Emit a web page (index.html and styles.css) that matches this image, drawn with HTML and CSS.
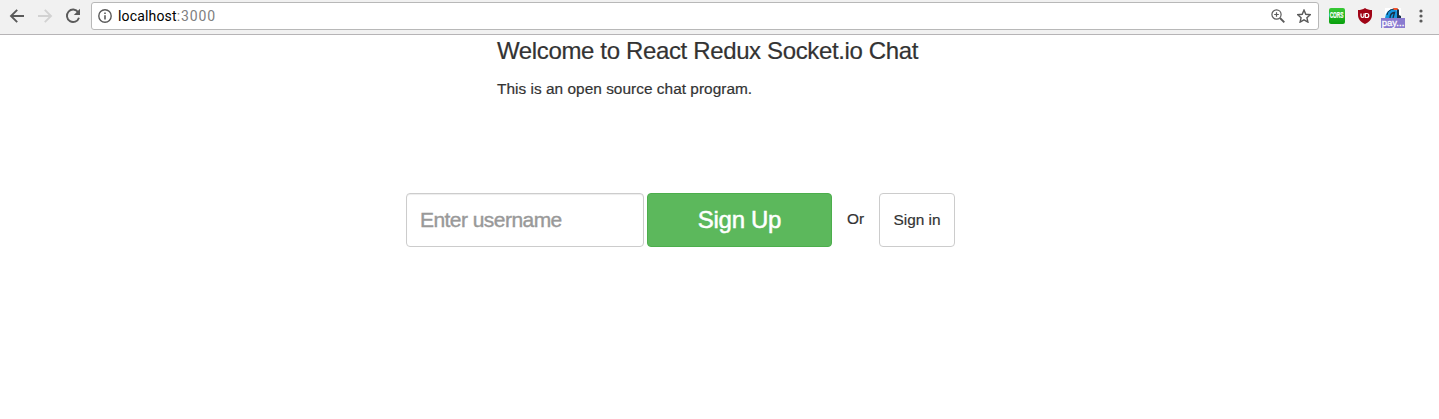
FILE: index.html
```html
<!DOCTYPE html>
<html lang="en">
<head>
<meta charset="utf-8">
<title>React Redux Socket.io Chat</title>
<link rel="stylesheet" href="styles.css">
</head>
<body>
<header class="toolbar">
  <nav class="nav">
    <svg width="16" height="16" viewBox="0 0 16 16" class="icon"><path d="M15 8H2.500M8.200 1.800L2 8l6.200 6.200"/></svg>
    <svg width="16" height="16" viewBox="0 0 16 16" class="icon icon-off"><path d="M1 8h12.500M7.800 1.800L14 8l-6.200 6.200"/></svg>
    <svg width="16" height="16" viewBox="0 0 16 16" class="icon"><path d="M13.200 4.200A6.200 6.200 0 1 0 14 9.700"/><path class="solid" d="M15 .8V7H8.800z"/></svg>
  </nav>
  <div class="address">
    <svg width="14" height="14" viewBox="0 0 14 14" class="icon info"><circle cx="7" cy="7" r="6.200"/><path class="solid" d="M6.200 6.200h1.600V10.500H6.200zM6.200 3.400h1.600V5H6.200z"/></svg>
    <span class="url">localhost<span class="port">:3000</span></span>
    <svg width="14" height="14" viewBox="0 0 14 14" class="icon zoom"><circle cx="5.500" cy="5.500" r="4.600"/><path d="M3.200 5.500h4.600M5.500 3.200v4.600"/><path class="handle" d="M9 9l4.300 4.300"/></svg>
    <svg width="14" height="14" viewBox="0 0 14 14" class="icon star"><path d="M7 1.100l1.800 4.200 4.500.4-3.400 3 1 4.400L7 10.800l-3.900 2.300 1-4.400-3.400-3 4.500-.4z"/></svg>
  </div>
  <div class="extensions">
    <span class="cors"><span class="cors-text">CORS</span></span>
    <svg class="shield" width="14" height="16" viewBox="0 0 14 16"><path fill="#a00416" d="M7 0c2 1.500 4.500 2 7 2v5c0 4.500-3 7.200-7 9-4-1.800-7-4.500-7-9V2c2.500 0 5-.5 7-2z"/><path fill="none" stroke="#fff" stroke-width="1.200" d="M3 5.500v2.300q0 1.700 1.500 1.700T6 7.800V5.500"/><path d="M7.300 5.500h1.500a2 2 0 0 1 0 4H7.300z" fill="none" stroke="#fff" stroke-width="1.200"/></svg>
    <span class="pay">
      <svg width="16" height="10" viewBox="0 0 16 10"><path fill="#fff" d="M0 0h16v10H0z"/><path fill="#1696df" d="M0 10Q1 1 9 .8q3 0 3 3V10z"/><path fill="none" stroke="#173047" stroke-width="1" d="M2 7Q3 1.500 9 1"/><path fill="#f0532d" d="M8 0h4.500l1 2H9z"/><path fill="none" stroke="#173047" stroke-width="1.300" d="M5 10q0-5 4.500-5.500L8 10"/><path fill="#172e46" d="M12 1.500h2V7l2 1v2h-4z"/></svg>
      <span class="badge">pay...</span>
    </span>
    <svg class="menu" width="4" height="14" viewBox="0 0 4 14"><circle cx="2" cy="2" r="1.600"/><circle cx="2" cy="7" r="1.600"/><circle cx="2" cy="12" r="1.600"/></svg>
  </div>
</header>
<main>
  <section class="intro">
    <h1>Welcome to React Redux Socket.io Chat</h1>
    <p>This is an open source chat program.</p>
  </section>
  <form class="signup">
    <input class="username" type="text" placeholder="Enter username">
    <button class="btn primary" type="button"><span>Sign Up</span></button>
    <span class="or">Or</span>
    <button class="btn plain" type="button"><span>Sign in</span></button>
  </form>
</main>
</body>
</html>
```
FILE: styles.css
```css
* { box-sizing: border-box; }
body {
  margin: 0;
  height: 419px;
  overflow: hidden;
  background: #fff;
  color: #333;
  font: 15.4px/22px "Liberation Sans", Arial, sans-serif;
  -webkit-text-stroke: .2px;
}
.toolbar {
  display: flex;
  height: 35px;
  background: #f1f1f1;
  border-bottom: 1px solid #b6b4b6;
}
.nav { display: flex; gap: 12px; padding: 8px 10px 0 9px; width: 91px; flex: none; }
svg { flex: none; display: block; }
.icon { fill: none; stroke: #5a5a5a; stroke-width: 1.9; }
.icon-off { stroke: #d2d2d2; }
.solid { fill: #5a5a5a; stroke: none; }
.address {
  display: flex;
  align-items: center;
  width: 1228px;
  height: 28px;
  margin-top: 2px;
  padding: 0 7px 0 6px;
  background: #fff;
  border: 1px solid #b8b8b8;
  border-radius: 3px;
}
.info { stroke-width: 1.4; }
.url { margin: 0 auto 0 6px; color: #000; font: 14px/18px Roboto, sans-serif; letter-spacing: .17px; -webkit-text-stroke: 0; }
.port { color: #808080; letter-spacing: .85px; }
.icon.zoom { stroke-width: 1.2; margin-right: 12px; }
.handle { stroke-width: 1.9; }
.star { stroke-width: 1.4; }
.extensions { display: flex; padding: 8px 0 0 10px; }
.cors { display: flex; align-items: center; justify-content: center; width: 16px; height: 16px; border-radius: 2px; background: linear-gradient(#38c936, #09a00d); }
.cors-text { flex: none; color: #fff; font: bold 8px/10px "Liberation Sans", sans-serif; transform: scale(.6, 1.1); }
.shield { margin-left: 13px; }
.pay { display: flex; flex-direction: column; align-items: center; width: 24px; margin-left: 9px; }
.badge { width: 24px; height: 10px; background: #8a7bd0; color: #fff; font: 9.5px/10px "Liberation Sans", sans-serif; text-align: center; -webkit-text-stroke: .3px; }
.menu { margin: 1px 0 0 14px; fill: #5a5a5a; }
.intro { margin-left: 497px; }
h1 { margin: 3px 0 0; font-size: 24px; line-height: 26px; font-weight: 400; letter-spacing: -.36px; white-space: nowrap; }
p { margin: 14px 0 0; letter-spacing: .03px; }
.signup { display: flex; margin: 93px 0 0 406px; }
.username {
  width: 238px;
  height: 54px;
  padding: 0 13px;
  border: 1px solid #ccc;
  border-radius: 4px;
  box-shadow: inset 0 1px 1px rgba(0,0,0,.075);
  font: 21px "Liberation Sans", Arial, sans-serif;
  letter-spacing: -.55px;
}
.username::placeholder { color: #999; opacity: 1; -webkit-text-stroke: .4px; }
.btn { height: 54px; padding: 0; border-radius: 4px; font-family: "Liberation Sans", Arial, sans-serif; }
.primary { width: 185px; margin-left: 3px; background: #5cb85c; border: 1px solid #4cae4c; color: #fff; font-size: 24px; letter-spacing: -.3px; -webkit-text-stroke: .5px; }
.or { margin: 15px 0 0 15px; width: 32px; }
.plain { width: 76px; border: 1px solid #ccc; background: #fff; color: #333; font-size: 15.4px; }
```
